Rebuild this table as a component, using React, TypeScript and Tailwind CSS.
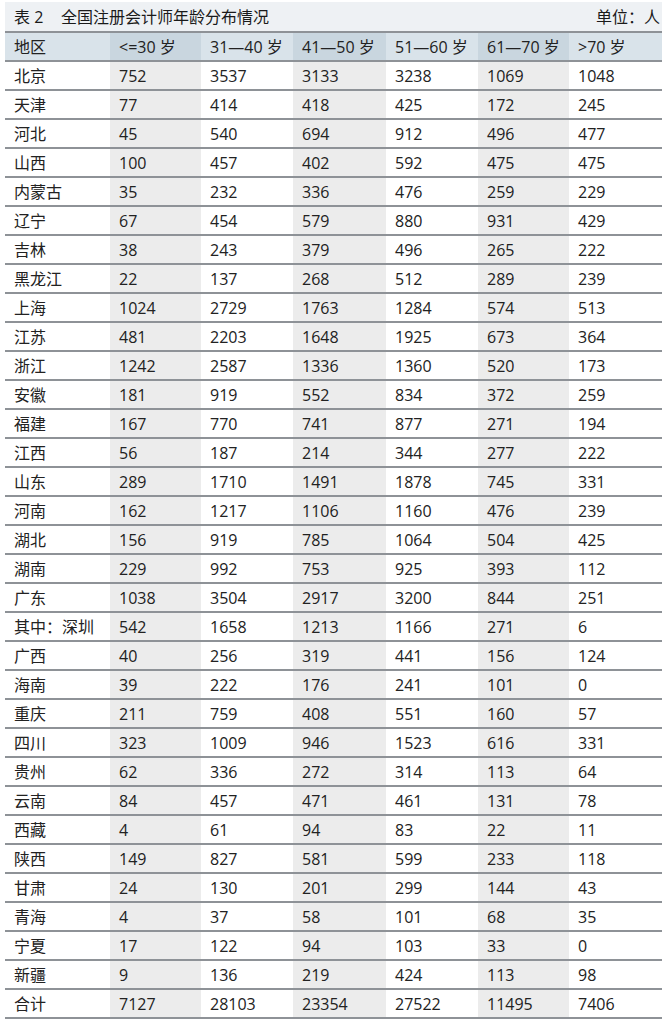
import React from "react";

const rows: (string | number)[][] = [
  ["北京", 752, 3537, 3133, 3238, 1069, 1048],
  ["天津", 77, 414, 418, 425, 172, 245],
  ["河北", 45, 540, 694, 912, 496, 477],
  ["山西", 100, 457, 402, 592, 475, 475],
  ["内蒙古", 35, 232, 336, 476, 259, 229],
  ["辽宁", 67, 454, 579, 880, 931, 429],
  ["吉林", 38, 243, 379, 496, 265, 222],
  ["黑龙江", 22, 137, 268, 512, 289, 239],
  ["上海", 1024, 2729, 1763, 1284, 574, 513],
  ["江苏", 481, 2203, 1648, 1925, 673, 364],
  ["浙江", 1242, 2587, 1336, 1360, 520, 173],
  ["安徽", 181, 919, 552, 834, 372, 259],
  ["福建", 167, 770, 741, 877, 271, 194],
  ["江西", 56, 187, 214, 344, 277, 222],
  ["山东", 289, 1710, 1491, 1878, 745, 331],
  ["河南", 162, 1217, 1106, 1160, 476, 239],
  ["湖北", 156, 919, 785, 1064, 504, 425],
  ["湖南", 229, 992, 753, 925, 393, 112],
  ["广东", 1038, 3504, 2917, 3200, 844, 251],
  ["其中：深圳", 542, 1658, 1213, 1166, 271, 6],
  ["广西", 40, 256, 319, 441, 156, 124],
  ["海南", 39, 222, 176, 241, 101, 0],
  ["重庆", 211, 759, 408, 551, 160, 57],
  ["四川", 323, 1009, 946, 1523, 616, 331],
  ["贵州", 62, 336, 272, 314, 113, 64],
  ["云南", 84, 457, 471, 461, 131, 78],
  ["西藏", 4, 61, 94, 83, 22, 11],
  ["陕西", 149, 827, 581, 599, 233, 118],
  ["甘肃", 24, 130, 201, 299, 144, 43],
  ["青海", 4, 37, 58, 101, 68, 35],
  ["宁夏", 17, 122, 94, 103, 33, 0],
  ["新疆", 9, 136, 219, 424, 113, 98],
  ["合计", 7127, 28103, 23354, 27522, 11495, 7406],
];

const headers = ["地区", "<=30 岁", "31—40 岁", "41—50 岁", "51—60 岁", "61—70 岁", ">70 岁"];

const gridCls =
  "grid grid-cols-[105px_91px_92px_93px_92px_91px_93px] h-[29px] border-b-2 border-[#8e9297]";

export default function App() {
  return (
    <div
      className="w-[668px] h-[1031px] bg-white pt-[2px] pl-[5px] text-[#222] text-[16px]"
      style={{ fontFamily: '"Open Sans", "Noto Sans CJK SC", sans-serif' }}
    >
      <div className="w-[657px]">
        <div className="flex items-center justify-between h-[31px] bg-[#eef1f4] border-b-2 border-[#8e9297] pl-[9px] pr-[2px] font-normal text-[#1a1a1a]">
          <div className="flex">
            <span className="w-[47px]">表 2</span>
            <span>全国注册会计师年龄分布情况</span>
          </div>
          <span>单位：人</span>
        </div>
        <div className={gridCls + " bg-[#d9e3ea]"}>
          {headers.map((h, i) => (
            <div
              key={i}
              className={
                "flex items-center pl-[9px] whitespace-nowrap " +
                (i % 2 === 1 ? "bg-[#c9d6df]" : "")
              }
            >
              {h}
            </div>
          ))}
        </div>
        {rows.map((r, ri) => (
          <div key={ri} className={gridCls}>
            {r.map((c, i) => (
              <div
                key={i}
                className={
                  "flex items-center pl-[9px] whitespace-nowrap " +
                  (i % 2 === 1 ? "bg-[#ececec]" : "")
                }
              >
                {c}
              </div>
            ))}
          </div>
        ))}
      </div>
    </div>
  );
}
